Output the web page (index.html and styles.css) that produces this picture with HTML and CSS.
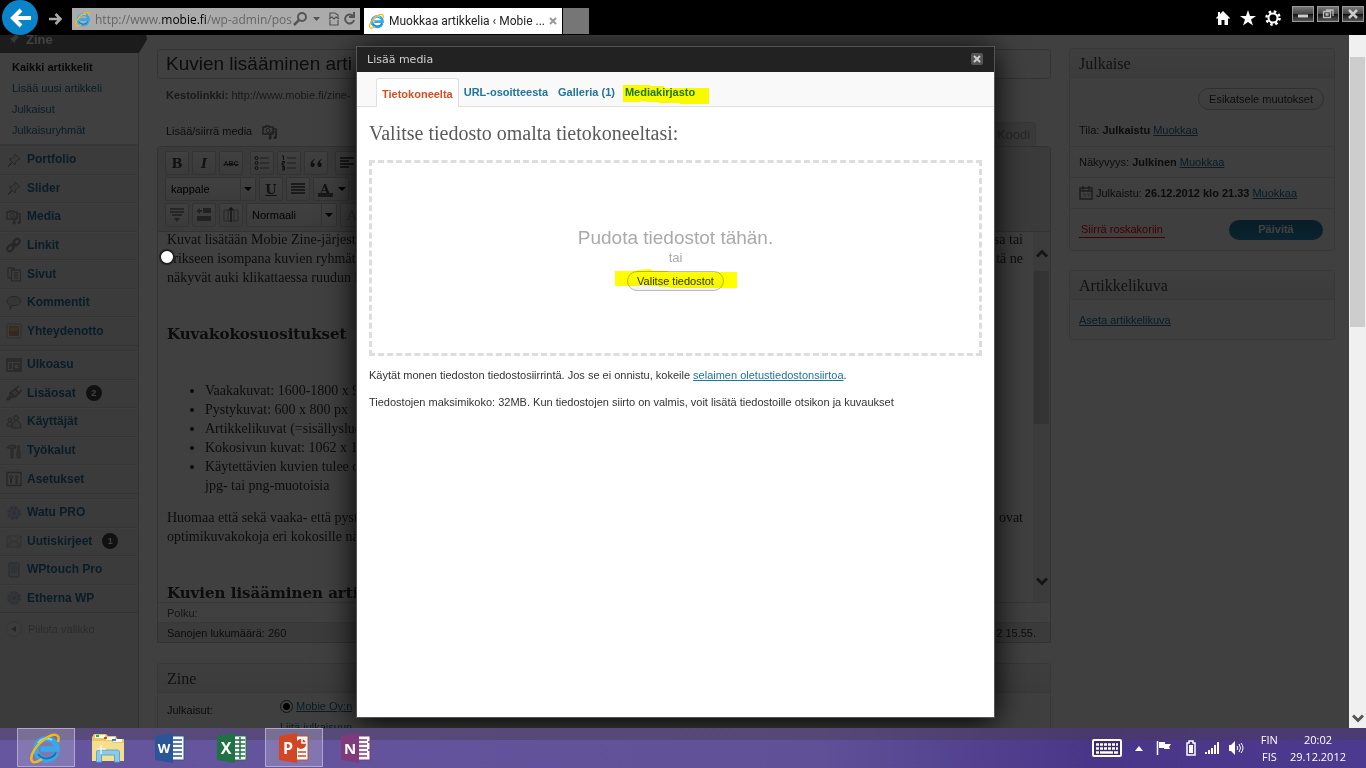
FILE: index.html
```html
<!DOCTYPE html>
<html lang="fi">
<head>
  <meta charset="UTF-8" />
  <meta name="viewport" content="width=device-width, initial-scale=1.0" />
  <title>Muokkaa artikkelia ‹ Mobie Zine</title>
  <link rel="stylesheet" href="styles.css">
</head>
<body>

  <!-- shared symbols -->
  <svg class="defs" aria-hidden="true">
    <symbol id="ie" viewBox="0 0 32 32">
      <path d="M26.500 20.500A10.500 10.500 0 1 1 27 17H10.500" fill="none" stroke="#38a8e6" stroke-width="5.500"/>
      <path d="M26 20.500A10.500 10.500 0 0 1 8 22" fill="none" stroke="#1673c0" stroke-width="2"/>
      <path d="M8 11a10.500 10.500 0 0 1 14-3" fill="none" stroke="#8fe0fb" stroke-width="2"/>
      <path d="M28 10C31 1 23 1 15 7 6 13-1 24 2 29c2 3 7 0 10-2" fill="none" stroke="#f2b91d" stroke-width="2.500"/>
    </symbol>
    <symbol id="pin" viewBox="0 0 16 16"><path d="M9 2l5 5-2 .5L9.500 10 9 13 6.500 10.500 2 15l3.500-5.500L3 7l3-.5L8.500 4z" fill="#ddd" stroke="#777"/></symbol>
    <symbol id="media" viewBox="0 0 16 16"><path d="M1 3h3V2h3v1h4v7H1zM11 5h3v8M8 10v4" fill="none" stroke="#777" stroke-width="1.500"/><circle cx="6" cy="6.500" r="2" fill="none" stroke="#777"/><path d="M9 14V8h5v6" fill="none" stroke="#777"/><circle cx="8" cy="14" r="1.500" fill="#777"/><circle cx="13" cy="13.500" r="1.500" fill="#777"/></symbol>
    <symbol id="flower" viewBox="0 0 16 16"><circle cx="8" cy="8" r="5.500" fill="#c3c8dc" stroke="#a4abc6" stroke-width="3" stroke-dasharray="3 1.300"/><circle cx="8" cy="8" r="2" fill="#9aa2c0"/></symbol>
    <symbol id="arrow-up" viewBox="0 0 12 9"><path d="M1 7.500L6 2.500l5 5" fill="none" stroke="currentColor" stroke-width="3"/></symbol>
    <symbol id="arrow-down" viewBox="0 0 12 9"><path d="M1 1.500l5 5 5-5" fill="none" stroke="currentColor" stroke-width="3"/></symbol>
  </svg>

  <header class="browser">
    <button class="back" aria-label="Takaisin"><svg viewBox="0 0 36 36"><path d="M29 18H11M19 10l-8 8 8 8" fill="none" stroke="#fff" stroke-width="4"/></svg></button>
    <button class="forward" aria-label="Eteenpäin"><svg viewBox="0 0 14 14"><path d="M0 7h11M6.500 2l5 5-5 5" fill="none" stroke="#aaa" stroke-width="2.500"/></svg></button>
    <div class="address">
      <svg class="ie-small"><use href="#ie"/></svg>
      <span class="url">http://www.<b>mobie.fi</b>/wp-admin/pos</span>
      <svg class="tools" viewBox="0 0 64 16">
        <circle cx="9" cy="6" r="4" fill="none" stroke="#555" stroke-width="2"/><path d="M6 9l-5 5" stroke="#555" stroke-width="2.500"/>
        <path d="M20 6h7l-3.500 4z" fill="#555"/>
        <path d="M37 7V2h5l3 2v3M37 9v5h8V9M36 8l3-2 2 2 2-2 3 2" fill="none" stroke="#555" stroke-width="1.200"/>
        <path d="M60 5a4.500 4.500 0 1 0 1 4M61 1v5h-5" fill="none" stroke="#555" stroke-width="2"/>
      </svg>
    </div>
    <div class="browser-tab">
      <svg class="ie-small"><use href="#ie"/></svg>
      <span>Muokkaa artikkelia ‹ Mobie ...</span>
      <svg class="tab-x" viewBox="0 0 8 8"><path d="M1 1l6 6M7 1L1 7" stroke="#999" stroke-width="2"/></svg>
    </div>
    <button class="new-tab" aria-label="Uusi välilehti"></button>
    <div class="browser-icons">
      <svg viewBox="0 0 16 16"><path d="M8 1l7 7-1 1-1-1v7H9.500v-5h-3v5H3V8L2 9 1 8l2-2V2h2v2z" fill="#fff"/></svg>
      <svg viewBox="0 0 16 16"><path d="M8 0l2 6h6l-5 3.500 2 6L8 12l-5 3.500 2-6L0 6h6z" fill="#fff"/></svg>
      <svg viewBox="0 0 16 16"><circle cx="8" cy="8" r="4.500" fill="none" stroke="#fff" stroke-width="2"/><circle cx="8" cy="8" r="6.500" fill="none" stroke="#fff" stroke-width="2.500" stroke-dasharray="2.500 2.600"/></svg>
    </div>
    <div class="window-buttons">
      <button aria-label="Pienennä"><svg viewBox="0 0 12 10"><path d="M1 7h10" stroke="#ccc" stroke-width="3"/></svg></button>
      <button aria-label="Palauta"><svg viewBox="0 0 12 10"><path d="M4 1h7v6M1.500 2.500h7v6h-7zM4 5h2v1H4z" fill="none" stroke="#bbb" stroke-width="1.300"/></svg></button>
      <button aria-label="Sulje"><svg viewBox="0 0 12 10"><path d="M2 1l8 8M10 1L2 9" stroke="#ccc" stroke-width="2.500"/></svg></button>
    </div>
  </header>

  <div class="window">
    <div class="page">

      <nav class="sidebar">
        <a class="current" href="#"><svg><use href="#pin"/></svg>Zine</a>
        <ul class="submenu">
          <li><a class="here" href="#">Kaikki artikkelit</a></li>
          <li><a href="#">Lisää uusi artikkeli</a></li>
          <li><a href="#">Julkaisut</a></li>
          <li><a href="#">Julkaisuryhmät</a></li>
        </ul>
        <div class="menu seven">
          <a href="#"><svg><use href="#pin"/></svg>Portfolio</a>
          <a href="#"><svg><use href="#pin"/></svg>Slider</a>
          <a href="#"><svg><use href="#media"/></svg>Media</a>
          <a href="#"><svg viewBox="0 0 16 16"><g fill="none" stroke="#777" stroke-width="2"><rect x="8" y="1.500" width="5" height="7" rx="2.500" transform="rotate(45 10.500 5)"/><rect x="2" y="7.500" width="5" height="7" rx="2.500" transform="rotate(45 4.500 11)"/><path d="M6 10l4-4"/></g></svg>Linkit</a>
          <a href="#"><svg viewBox="0 0 16 16"><path d="M2 2h6v2M2 2v10h3M5.500 4h9v11h-9zM8 7h4M8 9.500h4M8 12h4" fill="none" stroke="#888" stroke-width="1.300"/></svg>Sivut</a>
          <a href="#"><svg viewBox="0 0 16 16"><path d="M8 1.500c9 0 9 9 0 9l-2 0-2 4v-4.500C-1 8 0 1.500 8 1.500z" fill="#ccc" stroke="#777"/></svg>Kommentit</a>
          <a href="#"><svg viewBox="0 0 16 16"><rect x="1" y="1" width="14" height="14" rx="1" fill="#eee" stroke="#999"/><path d="M4 4h8v3H4z" fill="#e5c01f"/><path d="M4 8h8v4H4z" fill="#d8705a"/><path d="M3.500 3.500h9v9h-9zM4 8h8" fill="none" stroke="#a8963a"/></svg>Yhteydenotto</a>
        </div>
        <div class="menu five">
          <a href="#"><svg viewBox="0 0 16 16"><path d="M1 2h14v12H1zM1 4h14M3 7h3M3 9h3M3 11h3M8 7h5v5H8z" fill="none" stroke="#777" stroke-width="1.500"/></svg>Ulkoasu</a>
          <a href="#"><svg viewBox="0 0 16 16"><path d="M4 8l5-4 4 4-4 4H6l-4 3-1-1 3-3zM9 4l4-3M13 8l3-3M5 8l4 4" fill="#ccc" stroke="#777" stroke-width="1.500"/></svg>Lisäosat <span class="count">2</span></a>
          <a href="#"><svg viewBox="0 0 16 16"><g fill="#ccc" stroke="#777"><circle cx="4" cy="6" r="2"/><path d="M1 12c0-5 5-5 6-2v2z"/><circle cx="10" cy="4" r="2.500"/><path d="M6 14c-1-10 9-10 9 0z"/></g></svg>Käyttäjät</a>
          <a href="#"><svg viewBox="0 0 16 16"><path d="M1 5c2-4 6-3 9-2v2H7v10H5V5zM12 2v5l-1 1v7h3V8l-1-1V2" fill="#bbb" stroke="#777"/></svg>Työkalut</a>
          <a href="#"><svg viewBox="0 0 16 16"><path d="M1 1.500h14v13H1z" fill="none" stroke="#777" stroke-width="1.500"/><path d="M5 7v5M10.500 8v5" stroke="#777" stroke-width="2"/><circle cx="5" cy="6" r="1.500" fill="none" stroke="#777"/><circle cx="10.500" cy="6" r="2" fill="#999"/></svg>Asetukset</a>
        </div>
        <div class="menu four">
          <a href="#"><svg><use href="#flower"/></svg>Watu PRO</a>
          <a href="#"><svg viewBox="0 0 16 16"><path d="M1 3h14v11H1zM1 3l7 6 7-6M1 14l5-6M15 14l-5-6" fill="#ddd" stroke="#aaa"/></svg>Uutiskirjeet <span class="count">1</span></a>
          <a href="#"><svg viewBox="0 0 16 16"><rect x="3" y="1" width="10" height="14" rx="1" fill="#ccd3da" stroke="#758896"/><rect x="5" y="3" width="6" height="8" fill="#aebdca"/></svg>WPtouch Pro</a>
          <a href="#"><svg><use href="#flower"/></svg>Etherna WP</a>
        </div>
        <a class="collapse" href="#"><svg viewBox="0 0 16 16"><circle cx="8" cy="8" r="7.500" fill="#eee" stroke="#ccc"/><path d="M10 5v6L5 8z" fill="#999"/></svg>Piilota valikko</a>
      </nav>

      <main class="content">
        <input class="title" type="text" aria-label="Otsikko" value="Kuvien lisääminen arti">
        <p class="permalink"><b>Kestolinkki:</b> http://www.mobie.fi/zine-</p>
        <div class="media-row">
          <a href="#">Lisää/siirrä media <svg><use href="#media"/></svg></a>
          <button class="code-tab">Koodi</button>
        </div>

        <div class="editor">
          <div class="toolbar">
            <div class="tools-row">
              <button class="tool serif"><b>B</b></button>
              <button class="tool serif"><b><i>I</i></b></button>
              <button class="tool abc"><s>ABC</s></button>
              <span class="split"></span>
              <button class="tool" aria-label="Luettelo"><svg viewBox="0 0 16 16"><path d="M6 3h9M6 8h9M6 13h9" stroke="#777"/><g fill="none" stroke="#333"><circle cx="2.500" cy="3" r="1.500"/><circle cx="2.500" cy="8" r="1.500"/><circle cx="2.500" cy="13" r="1.500"/></g></svg></button>
              <button class="tool" aria-label="Numeroitu luettelo"><svg viewBox="0 0 16 16"><path d="M6 3h9M6 8h9M6 13h9" stroke="#777"/><path d="M1 1h1.500v4M1 6.500h2.500v1.500H1v2h2.500M1 11.500h2.500v3.500H1M1 13h2" fill="none" stroke="#333"/></svg></button>
              <button class="tool" aria-label="Lainaus"><svg viewBox="0 0 16 16"><path d="M7 4C2 5 1 12 4.500 12c3 0 3-4.500 0-4.500C5 6 6 5 7 4.500zM14 4c-5 1-6 8-2.500 8 3 0 3-4.500 0-4.500.5-1.500 1.500-2.500 2.500-3z" fill="#444"/></svg></button>
              <span class="split"></span>
              <button class="tool" aria-label="Tasaa vasemmalle"><svg viewBox="0 0 16 16"><path d="M1 3h14M1 6h9M1 9h14M1 12h9" stroke="#333" stroke-width="1.500"/></svg></button>
            </div>
            <div class="tools-row">
              <span class="pick"><select aria-label="Muoto"><option>kappale</option></select></span>
              <button class="tool serif"><b><u>U</u></b></button>
              <button class="tool" aria-label="Tasaa molemmat"><svg viewBox="0 0 16 16"><path d="M1 3h14M1 6h14M1 9h14M1 12h14" stroke="#444" stroke-width="1.500"/></svg></button>
              <button class="tool serif color"><b>A</b></button>
            </div>
            <div class="tools-row">
              <button class="tool" aria-label="Lisää rivi"><svg viewBox="0 0 16 16"><path d="M1 2h14M1 5h14M3 8h10" stroke="#999" stroke-width="2"/><path d="M5 11h6l-3 4z" fill="#888"/></svg></button>
              <button class="tool" aria-label="Lisää solu"><svg viewBox="0 0 16 16"><path d="M0 4l4-3v2h2v2H4v2zM7 1h8v5H7zM1 9h14v5H1z" fill="#888"/></svg></button>
              <button class="tool" aria-label="Jaa solu"><svg viewBox="0 0 16 16"><path d="M1 3h14v11H1zM5 3v11M11 3v11" fill="none" stroke="#999"/><path d="M8 2v13M6 3l2-2 2 2" stroke="#555" fill="none" stroke-width="1.500"/></svg></button>
              <span class="pick"><select aria-label="Koko"><option>Normaali</option></select></span>
              <button class="tool serif faint">A</button>
            </div>
          </div>

          <div class="canvas">
            <div class="text">
              <div class="line"><span>Kuvat lisätään Mobie Zine-järjeste</span><span>sa tai</span></div>
              <div class="line"><span>erikseen isompana kuvien ryhmät</span><span>tä ne</span></div>
              <p class="line">näkyvät auki klikattaessa ruudun k</p>
              <h2>Kuvakokosuositukset</h2>
              <ul>
                <li>Vaakakuvat: 1600-1800 x 90</li>
                <li>Pystykuvat: 600 x 800 px</li>
                <li>Artikkelikuvat (=sisällyslue</li>
                <li>Kokosivun kuvat: 1062 x 140</li>
                <li>Käytettävien kuvien tulee ol<br>jpg- tai png-muotoisia</li>
              </ul>
              <div class="line"><span>Huomaa että sekä vaaka- että pyst</span><span>ovat</span></div>
              <p class="line">optimikuvakokoja eri kokosille näy</p>
              <h2>Kuvien lisääminen arti</h2>
            </div>
            <div class="inner-scroll">
              <svg><use href="#arrow-up"/></svg>
              <div class="inner-thumb"></div>
              <svg><use href="#arrow-down"/></svg>
            </div>
          </div>
          <div class="path">Polku:</div>
          <div class="status"><span>Sanojen lukumäärä: 260</span><span>2 15.55.</span></div>
        </div>

        <section class="box zine">
          <h3>Zine</h3>
          <div class="zine-row">
            <span>Julkaisut:</span>
            <div>
              <label><input type="radio" name="zine" checked><a href="#">Mobie Oy:n</a></label>
              <a href="#">Liitä julkaisuun</a>
            </div>
          </div>
        </section>
      </main>

      <aside class="side">
        <section class="box">
          <h3>Julkaise</h3>
          <div class="preview"><button class="pill">Esikatsele muutokset</button></div>
          <p class="state">Tila: <b>Julkaistu</b> <a href="#">Muokkaa</a></p>
          <p class="misc">Näkyvyys: <b>Julkinen</b> <a href="#">Muokkaa</a></p>
          <p class="misc"><svg viewBox="0 0 14 14"><path d="M1 2h12v11H1zM4 0v4M10 0v4M1 5h12" fill="none" stroke="#777" stroke-width="1.500"/><path d="M4 8h2v3M8 8h2v3" fill="none" stroke="#999"/></svg>Julkaistu: <b>26.12.2012 klo 21.33</b> <a href="#">Muokkaa</a></p>
          <div class="publish"><a class="trash" href="#">Siirrä roskakoriin</a><button class="update">Päivitä</button></div>
        </section>
        <section class="box">
          <h3>Artikkelikuva</h3>
          <p class="thumb-link"><a href="#">Aseta artikkelikuva</a></p>
        </section>
      </aside>

      <div class="overlay">
        <span class="touch-dot"></span>
        <div class="modal" role="dialog" aria-label="Lisää media">
          <div class="modal-title"><span>Lisää media</span><button aria-label="Sulje"><svg viewBox="0 0 12 12"><rect width="12" height="12" rx="2" fill="#555"/><path d="M3 3l6 6M9 3L3 9" stroke="#ccc" stroke-width="2"/></svg></button></div>
          <div class="modal-tabs">
            <a class="active" href="#">Tietokoneelta</a>
            <a href="#">URL-osoitteesta</a>
            <a href="#">Galleria (1)</a>
            <a class="marked" href="#">Mediakirjasto<svg class="marker" viewBox="0 0 86 19"><path d="M0 0h26l2 1h13v2h45v16H57v-1H36l-2-1H24l-2-1h-4v1H0z" fill="#ff0"/></svg></a>
          </div>
          <div class="modal-body">
            <h1>Valitse tiedosto omalta tietokoneeltasi:</h1>
            <div class="drop">
              <p class="drop-big">Pudota tiedostot tähän.</p>
              <p class="drop-or">tai</p>
              <div class="marked"><button class="pill small">Valitse tiedostot</button><svg class="marker wide" viewBox="0 0 122 20"><path d="M0 2h21l2-1 12-1 3 2h15v1h69v16H56l-3-1h-8l-3-1h-9l-6-1-4 1H0z" fill="#ff0"/></svg></div>
            </div>
            <p class="note">Käytät monen tiedoston tiedostosiirrintä. Jos se ei onnistu, kokeile <a href="#">selaimen oletustiedostonsiirtoa</a>.</p>
            <p class="note">Tiedostojen maksimikoko: 32MB. Kun tiedostojen siirto on valmis, voit lisätä tiedostoille otsikon ja kuvaukset</p>
          </div>
        </div>
      </div>
    </div>

    <div class="page-scroll">
      <div class="page-thumb"></div>
      <svg><use href="#arrow-down"/></svg>
    </div>
  </div>

  <footer class="taskbar">
    <div class="apps">
      <button class="open" aria-label="Internet Explorer"><svg viewBox="0 0 32 32"><use href="#ie"/></svg></button>
      <button aria-label="Resurssienhallinta"><svg viewBox="0 0 32 32"><path d="M0 5l2-3h12l2 2h8l1 3h7v22H0z" fill="#e8c765"/><path d="M3 3h10v3H3zM14 5h9v3h-9zM21 7h9v3h-9z" fill="#fff"/><path d="M4 3h3v2H4z" fill="#1b3"/><path d="M12 5h3v2h-3z" fill="#d42"/><path d="M20 7h4v2h-4z" fill="#28d"/><path d="M0 9h19l2 2h11v18H0z" fill="#f5df8f"/><path d="M4.500 30V20q0-2 2-2h19q2 0 2 2v10h-5v-7h-13v7z" fill="#8ccbe8" stroke="#5ba9cc"/><path d="M9 13v9M5 17h9" stroke="#fff"/></svg></button>
      <button aria-label="Word"><svg viewBox="0 0 32 32"><path d="M16 4h14v24H16z" fill="#fff" stroke="#2a5699"/><path d="M19 8h9M19 12h9M19 16h9M19 20h9M19 24h9" stroke="#2a5699" stroke-width="1.500"/><path d="M1 4l18-3v30L1 28z" fill="#2a5699"/><text x="10" y="21" font-size="13">W</text></svg></button>
      <button aria-label="Excel"><svg viewBox="0 0 32 32"><path d="M16 4h14v24H16z" fill="#fff" stroke="#207245"/><path d="M19 8h10M19 12h10M19 16h10M19 20h10M19 24h10M24 5v22" stroke="#207245" stroke-width="1.500"/><path d="M1 4l18-3v30L1 28z" fill="#207245"/><text x="10" y="22" font-size="16">X</text></svg></button>
      <button class="open" aria-label="PowerPoint"><svg viewBox="0 0 32 32"><path d="M16 4h14v24H16z" fill="#fff" stroke="#d24625"/><path d="M20 20h8M20 24h8" stroke="#d24625" stroke-width="1.500"/><circle cx="23" cy="12" r="5" fill="#d24625"/><path d="M24 6v5h5" fill="none" stroke="#fff" stroke-width="1.500"/><path d="M1 4l18-3v30L1 28z" fill="#d24625"/><text x="10" y="22" font-size="16">P</text></svg></button>
      <button aria-label="OneNote"><svg viewBox="0 0 32 32"><path d="M16 4h14v24H16z" fill="#fff" stroke="#80397b"/><path d="M19 8h8M19 12h8M19 16h8M19 20h8M19 24h8M28 10h2M28 18h2" stroke="#80397b" stroke-width="1.500"/><path d="M1 4l18-3v30L1 28z" fill="#80397b"/><text x="10" y="22" font-size="15">N</text></svg></button>
    </div>
    <div class="tray">
      <svg class="keyboard" viewBox="0 0 30 18"><rect x="1" y="1" width="28" height="16" rx="1" fill="#3b2b6b" stroke="#fff" stroke-width="2"/><path d="M4 5.500h22M4 9.500h22" stroke="#fff" stroke-width="2.500" stroke-dasharray="3 1"/><path d="M4 13.500h3M8 13.500h13M22 13.500h4" stroke="#fff" stroke-width="2.500"/></svg>
      <svg class="up" viewBox="0 0 8 5"><path d="M0 5l4-5 4 5z" fill="#fff"/></svg>
      <svg class="flag" viewBox="0 0 16 16"><path d="M1.500 1v14" stroke="#fff" stroke-width="1.500"/><path d="M3 2h6v2h6l-2 3 1 2H8V8H3z" fill="#fff"/></svg>
      <svg class="battery" viewBox="0 0 10 16"><path d="M3 1h4v2h2v12H1V3h2z" fill="none" stroke="#fff" stroke-width="1.500"/><path d="M3 5h4v8H3z" fill="#fff"/></svg>
      <svg class="signal" viewBox="0 0 16 16"><path d="M1 12h2v2H1zM4 10h2v4H4zM7 8h2v6H7zM10 5h2v9h-2zM13 2h2v12h-2z" fill="#fff"/></svg>
      <svg class="volume" viewBox="0 0 16 16"><path d="M1 5h2l4-4v14l-4-4H1z" fill="#fff"/><path d="M9 6q1.500 2 0 4M11 4q3 4 0 8M13 3q4 5 0 10" fill="none" stroke="#fff"/></svg>
      <div class="lang">FIN<br>FIS</div>
      <div class="clock">20:02<br>29.12.2012</div>
    </div>
  </footer>

</body>
</html>
```
FILE: styles.css
```css
* {
  box-sizing: border-box;
}

body {
  margin: 0;
  height: 100vh;
  display: flex;
  flex-direction: column;
  overflow: hidden;
  font-family: "Liberation Sans", Arial, sans-serif;
  font-size: 11px;
  line-height: 15px;
  color: #333;
  background: #000;
}

p, h1, h2, h3, ul {
  margin: 0;
  padding: 0;
}

button {
  font: inherit;
  padding: 0;
  border: 0;
  background: none;
}

a {
  color: #21759b;
}

svg {
  flex-shrink: 0;
}

.defs {
  position: absolute;
  width: 0;
  height: 0;
}

/* browser frame */
.browser {
  height: 35px;
  flex-shrink: 0;
  display: flex;
  align-items: flex-start;
  padding-left: 2px;
  background: #000;
  font-family: "Open Sans", sans-serif;
  font-size: 12px;
}

.back {
  width: 36px;
  height: 35px;
  border-radius: 50%;
  background: #0a84c8;
}

.back svg {
  display: block;
  width: 36px;
  height: 36px;
}

.forward {
  width: 14px;
  height: 14px;
  margin: 12px 9px 0 11px;
}

.forward svg {
  display: block;
}

.address {
  width: 288px;
  height: 22px;
  margin-top: 8px;
  padding: 0 3px;
  display: flex;
  align-items: center;
  background: #ababab;
}

.ie-small {
  width: 16px;
  height: 16px;
}

.url {
  flex: 1;
  margin-left: 4px;
  color: #666;
  white-space: nowrap;
}

.url b {
  font-weight: normal;
  color: #000;
}

.tools {
  width: 64px;
  height: 16px;
}

.browser-tab {
  width: 198px;
  height: 26px;
  margin: 8px 1px 0 4px;
  padding: 0 6px 0 5px;
  display: flex;
  align-items: center;
  gap: 4px;
  background: #fff;
  color: #222;
  font-family: Roboto, sans-serif;
  white-space: nowrap;
}

.browser-tab span {
  flex: 1;
}

.tab-x {
  width: 8px;
  height: 8px;
}

.new-tab {
  width: 26px;
  height: 26px;
  margin-top: 8px;
  background: #767676;
}

.browser-icons {
  margin: 10px 11px 0 auto;
  display: flex;
  gap: 9px;
}

.browser-icons svg {
  width: 16px;
  height: 16px;
}

.window-buttons {
  display: flex;
  gap: 3px;
  margin: 6px 2px 0 0;
}

.window-buttons button {
  width: 22px;
  height: 16px;
  border: 1px solid #999;
  background: linear-gradient(#777, #444 50%, #111 50%, #555);
}

.window-buttons svg {
  display: block;
  width: 12px;
  height: 10px;
  margin: 0 auto;
}

/* page */
.window {
  flex: 1;
  min-height: 0;
  display: flex;
}

.page {
  position: relative;
  flex: 1;
  display: flex;
  align-items: flex-start;
  overflow: hidden;
  background: #fff;
  padding-right: 14px;
}

.sidebar {
  width: 139px;
  height: 100%;
  flex-shrink: 0;
  background: #ececec;
  border-right: 1px solid #ccc;
}

.sidebar a {
  text-decoration: none;
}

.sidebar svg {
  width: 16px;
  height: 16px;
}

.menu svg {
  opacity: 0.7;
}

.current {
  position: relative;
  width: 139px;
  height: 18px;
  display: flex;
  align-items: center;
  gap: 4px;
  padding: 0 6px 10px;
  background: linear-gradient(#757575, #6d6d6d);
  color: #fff;
  font-size: 13px;
  font-weight: bold;
}

.current::after {
  content: "";
  position: absolute;
  left: 139px;
  top: 0;
  width: 8px;
  height: 18px;
  background: #6d6d6d;
  clip-path: polygon(0 0, 90% 0, 100% 25%, 0 100%);
}

.submenu {
  list-style: none;
  height: 92px;
  padding: 4px 0 0 12px;
  background: #fff;
  border-bottom: 1px solid #ddd;
}

.submenu li {
  height: 21px;
  line-height: 21px;
}

.submenu .here {
  color: #222;
  font-weight: bold;
}

.menu {
  display: grid;
  grid-auto-rows: 1fr;
  border-bottom: 1px solid #ccc;
  margin-bottom: 4px;
}

.seven {
  height: 201px;
}

.five {
  height: 144px;
}

.four {
  height: 115px;
}

.menu a {
  display: flex;
  align-items: center;
  gap: 5px;
  padding-left: 6px;
  border-top: 1px solid #d6d6d6;
  box-shadow: inset 0 1px #f8f8f8;
  font-size: 12px;
  font-weight: bold;
}

.count {
  width: 16px;
  height: 16px;
  margin-left: 5px;
  border-radius: 50%;
  background: #464646;
  color: #fff;
  font-size: 9px;
  line-height: 16px;
  text-align: center;
}

.collapse {
  display: flex;
  align-items: center;
  gap: 6px;
  height: 24px;
  padding-left: 6px;
  color: #aaa;
}

.content {
  flex: 1;
  min-width: 0;
  padding: 14px 18px 0;
}

.title {
  display: block;
  width: 100%;
  height: 30px;
  padding: 0 8px;
  border: 1px solid #ccc;
  border-radius: 3px;
  color: #333;
  background: #fff;
  font-family: inherit;
  font-size: 19px;
}

.permalink {
  margin-top: 9px;
  padding-left: 9px;
  color: #666;
}

.media-row {
  display: flex;
  justify-content: space-between;
  align-items: flex-end;
  height: 43px;
  padding: 0 15px 0 9px;
}

.media-row a {
  display: flex;
  align-items: center;
  gap: 10px;
  height: 29px;
  color: #333;
  text-decoration: none;
}

.media-row svg {
  width: 16px;
  height: 16px;
}

.code-tab {
  width: 45px;
  height: 24px;
  border: 1px solid #dfdfdf;
  border-bottom: 0;
  border-radius: 3px 3px 0 0;
  background: #e9e9e9;
  color: #999;
  font-size: 13px;
}

.editor {
  border: 1px solid #ccc;
  border-radius: 3px 3px 0 0;
}

.toolbar {
  height: 85px;
  padding: 4px 7px;
  display: flex;
  flex-direction: column;
  gap: 2px;
  background: #e9e9e9;
  border-bottom: 1px solid #ccc;
}

.tools-row {
  display: flex;
  gap: 3px;
}

.tool {
  width: 24px;
  height: 24px;
  border: 1px solid #ccc;
  border-radius: 2px;
  background: linear-gradient(#fff, #e8e8e8);
  color: #444;
}

.tool svg {
  display: block;
  width: 16px;
  height: 16px;
  margin: 0 auto;
}

.serif {
  font-family: "DejaVu Serif", serif;
  font-size: 13px;
}

.abc {
  font-size: 7px;
  font-weight: bold;
}

.split {
  width: 1px;
}

.pick {
  position: relative;
  width: 91px;
  height: 24px;
}

.pick select {
  appearance: none;
  width: 100%;
  height: 100%;
  padding: 0 5px;
  border: 1px solid #ccc;
  border-radius: 2px;
  background: linear-gradient(#fff, #eee);
  color: #000;
  font: inherit;
}

.pick::after {
  content: "";
  position: absolute;
  right: 4px;
  top: 10px;
  border: 4px solid transparent;
  border-top-color: #000;
}

.pick::before {
  content: "";
  position: absolute;
  right: 15px;
  top: 1px;
  width: 1px;
  height: 22px;
  background: #ccc;
}

.color {
  position: relative;
  width: 36px;
  padding-right: 12px;
}

.color::after {
  content: "";
  position: absolute;
  right: 2px;
  top: 9px;
  border: 4px solid transparent;
  border-top-color: #000;
}

.color::before {
  content: "";
  position: absolute;
  left: 4px;
  bottom: 3px;
  width: 15px;
  height: 4px;
  background: #666;
}

.faint {
  color: #aaa;
}

.canvas {
  height: 370px;
  display: flex;
  overflow: hidden;
}

.text {
  flex: 1;
  margin-top: -2px;
  padding: 0 10px 0 9px;
  font-family: "Liberation Serif", serif;
  font-size: 14px;
  line-height: 19px;
  color: #333;
}

.line {
  display: flex;
  justify-content: space-between;
  white-space: nowrap;
}

.text h2 {
  margin: 38px 0 37px;
  font-family: "DejaVu Serif", serif;
  font-size: 15px;
  line-height: 19px;
}

.text ul {
  padding-left: 38px;
  margin-bottom: 13px;
}

.inner-scroll {
  width: 17px;
  padding: 17px 0 16px;
  display: flex;
  flex-direction: column;
  align-items: center;
  background: #f0f0f0;
  color: #555;
}

.inner-scroll svg {
  width: 12px;
  height: 9px;
}

.inner-thumb {
  width: 15px;
  height: 153px;
  margin: 13px 0 auto;
  background: #cdcdcd;
}

.path,
.status {
  height: 20px;
  padding: 0 9px;
  line-height: 20px;
  border-top: 1px solid #ddd;
  color: #555;
}

.status {
  display: flex;
  justify-content: space-between;
  padding-right: 14px;
  background: #e9e9e9;
  color: #333;
}

.box {
  margin-bottom: 19px;
  border: 1px solid #dfdfdf;
  border-radius: 3px;
  background: #f9f9f9;
}

.box h3 {
  height: 29px;
  padding-left: 9px;
  border-bottom: 1px solid #dfdfdf;
  background: linear-gradient(#f8f8f8, #ececec);
  color: #464646;
  font-family: "Liberation Serif", serif;
  font-size: 16px;
  font-weight: normal;
  line-height: 29px;
}

.zine {
  margin-top: 20px;
}

.zine-row {
  display: flex;
  padding: 6px 9px;
}

.zine-row > span {
  width: 113px;
  padding-top: 4px;
}

.zine-row label {
  display: flex;
  align-items: center;
  gap: 3px;
  margin-bottom: 6px;
}

.zine-row input {
  appearance: none;
  width: 13px;
  height: 13px;
  margin: 0;
  border: 1px solid #444;
  border-radius: 50%;
  background: radial-gradient(#000 3px, #fff 4px);
}

.side {
  width: 266px;
  flex-shrink: 0;
  padding-top: 13px;
}

.preview {
  padding: 10px 10px 0;
  text-align: right;
}

.pill {
  height: 22px;
  padding: 0 10px;
  border: 1px solid #bbb;
  border-radius: 11px;
  background: linear-gradient(#fff, #f2f2f2);
  color: #333;
}

.small {
  display: block;
  height: 20px;
  padding: 0 9px;
}

.state {
  padding: 13px 9px 8px;
}

.misc {
  display: flex;
  align-items: center;
  gap: 3px;
  height: 31px;
  padding: 0 9px;
  border-top: 1px solid #dfdfdf;
}

.misc svg {
  width: 14px;
  height: 14px;
}

.publish {
  display: flex;
  justify-content: space-between;
  align-items: center;
  height: 42px;
  padding: 0 11px 0 9px;
  border-top: 1px solid #dfdfdf;
}

.trash {
  padding: 0 2px;
  color: #f00;
  text-decoration: none;
  border-bottom: 1px solid #f00;
}

.update {
  width: 94px;
  height: 20px;
  border-radius: 10px;
  background: linear-gradient(#21759b, #298cba);
  color: #fff;
  font-weight: bold;
}

.thumb-link {
  padding: 13px 9px 11px;
}

/* media dialog */
.overlay {
  position: absolute;
  inset: 0;
  display: flex;
  align-items: center;
  justify-content: center;
  padding-left: 2px;
  background: rgba(0, 0, 0, 0.75);
}

.touch-dot {
  position: absolute;
  left: 159px;
  top: 214px;
  width: 16px;
  height: 16px;
  border: 2px solid #222;
  border-radius: 50%;
  background: #fff;
}

.modal {
  width: 639px;
  height: calc(100% - 21px);
  display: flex;
  flex-direction: column;
  border: 1px solid #555;
  background: #fff;
  box-shadow: 0 4px 30px #000;
}

.modal-title {
  height: 25px;
  flex-shrink: 0;
  padding: 0 11px 0 10px;
  display: flex;
  align-items: center;
  justify-content: space-between;
  background: #222;
  color: #cfcfcf;
  font-family: "DejaVu Sans", sans-serif;
}

.modal-title svg {
  display: block;
  width: 12px;
  height: 12px;
}

.modal-tabs {
  height: 35px;
  flex-shrink: 0;
  display: flex;
  align-items: flex-end;
  padding-left: 19px;
  background: #f9f9f9;
  border-bottom: 1px solid #dfdfdf;
  font-weight: bold;
}

.modal-tabs a {
  height: 29px;
  padding: 0 5px;
  line-height: 30px;
  text-decoration: none;
}

.modal-tabs .active {
  height: 29px;
  margin-bottom: -1px;
  border: 1px solid #dfdfdf;
  border-bottom: 0;
  border-radius: 3px 3px 0 0;
  background: #fff;
  color: #d54e21;
}

.marked {
  position: relative;
}

.marker {
  position: absolute;
  left: 3px;
  top: 8px;
  width: 86px;
  height: 19px;
  mix-blend-mode: multiply;
  pointer-events: none;
}

.marker.wide {
  left: -12px;
  top: -2px;
  width: 122px;
  height: 20px;
}

.modal-body {
  padding: 14px 12px;
}

.modal-body h1 {
  margin-bottom: 14px;
  color: #5a5a5a;
  font-family: "Liberation Serif", serif;
  font-size: 20px;
  font-weight: normal;
  line-height: 25px;
}

.drop {
  height: 196px;
  margin-bottom: 12px;
  display: flex;
  flex-direction: column;
  align-items: center;
  justify-content: center;
  padding-top: 2px;
  border: 3px dashed #ddd;
  color: #aaa;
}

.drop-big {
  font-size: 19px;
  line-height: 24px;
}

.drop-or {
  margin-bottom: 6px;
  font-size: 13px;
}

.note {
  margin-bottom: 12px;
}

/* page scroll bar */
.page-scroll {
  width: 17px;
  flex-shrink: 0;
  padding: 22px 1px 5px;
  display: flex;
  flex-direction: column;
  justify-content: space-between;
  align-items: center;
  background: #f0f0f0;
  color: #555;
}

.page-thumb {
  width: 15px;
  height: 270px;
  background: #cdcdcd;
}

.page-scroll svg {
  width: 12px;
  height: 9px;
}

/* taskbar */
.taskbar {
  height: 40px;
  flex-shrink: 0;
  display: flex;
  justify-content: space-between;
  padding: 0 20px 0 17px;
  background: linear-gradient(rgba(70, 60, 70, 0.4) 12px, transparent 12px), linear-gradient(90deg, #65569f, #5f5098 60%, #4a3688 80%, #4c3a90);
  color: #fff;
  font-family: "Open Sans", sans-serif;
}

.apps {
  display: flex;
  gap: 4px;
}

.apps button {
  width: 58px;
  height: 39px;
  border: 1px solid transparent;
}

.apps .open {
  border-color: #b0a6d0;
  background: rgba(255, 255, 255, 0.2);
}

.apps svg {
  display: block;
  width: 32px;
  height: 32px;
  margin: 0 auto;
}

.apps text {
  fill: #fff;
  font-weight: bold;
  text-anchor: middle;
}

.tray {
  display: flex;
  align-items: center;
}

.keyboard {
  width: 30px;
  height: 18px;
  margin-right: 13px;
}

.up {
  width: 8px;
  height: 5px;
  margin-right: 13px;
}

.flag {
  width: 16px;
  height: 16px;
  margin-right: 14px;
}

.battery {
  width: 10px;
  height: 16px;
  margin-right: 8px;
}

.signal,
.volume {
  width: 16px;
  height: 16px;
  margin-right: 8px;
}

.lang,
.clock {
  font-size: 11px;
  line-height: 17px;
  text-align: center;
}

.lang {
  margin: 0 12px 0 9px;
}
```
